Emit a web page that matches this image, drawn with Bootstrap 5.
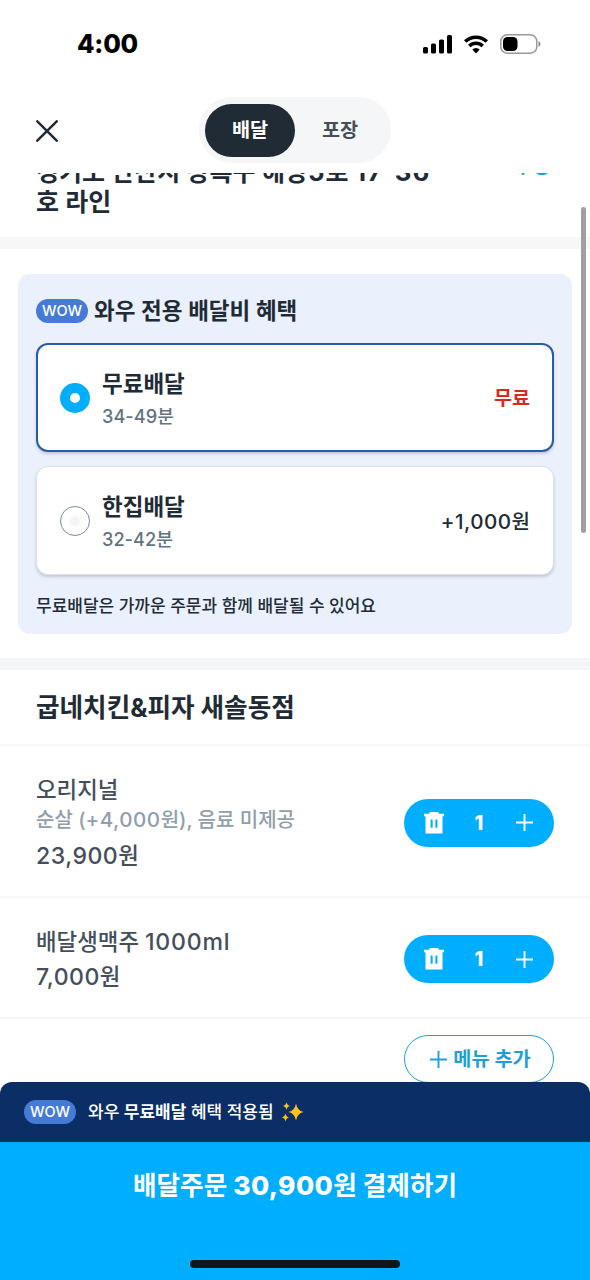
<!DOCTYPE html>
<html lang="ko">
<head>
<meta charset="utf-8">
<meta name="viewport" content="width=device-width, initial-scale=1">
<title>배달 주문</title>
<link href="https://cdn.jsdelivr.net/npm/bootstrap@5.3.0/dist/css/bootstrap.min.css" rel="stylesheet">
<style>
  body { font-family: Inter, "Noto Sans CJK KR", sans-serif; color: #212b36; background: #fff; }
  .phone { width: 590px; height: 1280px; }
  .phone > * { flex-shrink: 0; }
  .t { white-space: nowrap; line-height: 1; }
  .n { letter-spacing: .5px; font-size: 1.03em; }
  .status { height: 88px; padding: 0 49px 0 77px; }
  .clock { font-size: 25.5px; font-weight: 800; color: #000; letter-spacing: -.2px; }
  .topbar { height: 85px; padding: 10px 36px 9px 36px; }
  .switcher { width: 192px; height: 66px; padding: 7px 6px 6px; background: #f4f6f8; border-radius: 33px; margin: -1px 0 1px 141px; }
  .switcher .on, .switcher .off { width: 90px; font-size: 19.7px; padding-top: 1px; }
  .switcher .on { background: #212b36; color: #fff; border-radius: 27px; font-weight: 700; }
  .switcher .off { color: #454f5b; font-weight: 600; }
  .address { height: 64px; padding: 0 36px; }
  .address-text { font-size: 25px; line-height: 30px; font-weight: 600; margin-top: -16px; white-space: nowrap; }
  .address-text .n { font-weight: 700; letter-spacing: 1.2px; word-spacing: 4px; }
  .address-edit { font-size: 19.5px; line-height: 30px; color: #1a9fe0; margin: -22px 4px 0 0; font-weight: 600; }
  .band { height: 12px; }
  .benefit { margin: 25px 18px 24px; height: 360px; padding: 22px 18px 0; background: #eaf1fc; border-radius: 12px; }
  .wow { width: 52px; height: 24px; border-radius: 12px; background: #457bd6; color: #fff; font-size: 14.5px; font-weight: 500; }
  .benefit-title { font-size: 22.5px; font-weight: 600; margin-left: 6px; }
  .option { height: 109px; border-radius: 12px; background: #fff; padding: 1px 23px 0; border: 1px solid #dde2ea; box-shadow: 0 2px 3px rgba(50,60,80,.22); }
  .option.chosen { border: 2px solid #2a5ba8; padding: 1px 22px 0; }
  .dot { width: 30px; height: 30px; border-radius: 50%; margin: -1px 12px 0 0; }
  .dot-on { border: 10px solid #00aeff; }
  .dot-off { border: 1.5px solid #7d8b97; background: radial-gradient(circle, #f3f4f5 0 3px, #fff 7px); }
  .option-name { font-size: 22.5px; font-weight: 600; margin: 2px 0 11px; }
  .option-time { font-size: 18.2px; color: #637381; font-weight: 500; }
  .price { font-size: 20px; font-weight: 500; padding-top: 2px; }
  .red { color: #da291c; font-size: 19.5px; font-weight: 600; padding-top: 1px; }
  .note { font-size: 17px; margin-top: 23px; font-weight: 500; }
  .store { height: 74px; padding: 1px 36px 0; font-size: 25.6px; font-weight: 700; }
  .item { padding: 3px 36px 0; border-top: 2px solid #f5f6f7; color: #454f5b; font-weight: 500; }
  .item-name { font-size: 22.4px; margin-top: 2px; }
  .item-sub { font-size: 20px; color: #919eab; }
  .item-price { font-size: 22.4px; }
  .stepper { width: 150px; height: 48px; border-radius: 24px; background: #00aeff; color: #fff; padding: 0 21px 0 20px; font-size: 20px; font-weight: 800; }
  .stepper .t { margin-right: 2px; }
  .more { border-top: 2px solid #f5f6f7; padding: 16px 36px 0; height: 65px; }
  .btn-add { width: 150px; height: 48px; flex: none; border: 1.5px solid #1f9fda; border-radius: 24px; color: #1f9fda; font-size: 19.7px; font-weight: 600; gap: 6px; padding: 1px 0 0 3px; }
  .perk { height: 60px; background: #0b2e66; border-radius: 12px 12px 0 0; color: #fff; padding: 0 24px; font-size: 17px; font-weight: 500; }
  .pay { height: 138px; background: #00aeff; color: #fff; }
  .pay-label { font-size: 25.6px; font-weight: 700; padding-top: 30px; }
  .pay-label .n { font-weight: 800; letter-spacing: .4px; }
  .home { width: 210px; height: 8px; border-radius: 4px; background: #10151a; margin-bottom: 12px; }
  .scroller { top: 207px; right: 4px; width: 5px; height: 326px; border-radius: 3px; background: #a0a0a0; }
  svg { display: block; flex: none; }
</style>
</head>
<body>
<div class="phone position-relative overflow-hidden d-flex flex-column">
  <div class="status d-flex align-items-center">
    <div class="clock t me-auto">4:00</div>
    <svg width="30" height="20" viewBox="0 0 30 20"><rect x="0" y="13" width="5" height="6.500" rx="1.600"/><rect x="8" y="9.500" width="5" height="10" rx="1.600"/><rect x="16" y="5.500" width="5" height="14" rx="1.600"/><rect x="24" y="1" width="5" height="18.500" rx="1.600"/></svg>
    <svg style="margin:0 11px 0 10px" width="26" height="20" viewBox="0 0 26 20" fill="none" stroke="#000" stroke-width="3.5"><path d="M2.200 7.600a15.300 15.300 0 0 1 21.600 0M6.300 12a9.600 9.600 0 0 1 13.400 0"/><path d="M9.300 15.600a5.200 5.200 0 0 1 7.400 0L13 19.400z" fill="#000" stroke="none"/></svg>
    <svg width="41" height="20" viewBox="0 0 41 20"><rect x=".8" y=".8" width="36" height="18.400" rx="6.500" fill="none" stroke="#999" stroke-width="1.500"/><rect x="3" y="3" width="14.500" height="14" rx="4.500"/><path d="M38.500 7v6q2-1 2-3t-2-3" fill="#888"/></svg>
  </div>

  <div class="topbar d-flex align-items-center">
    <svg width="22" height="22" viewBox="0 0 22 22" fill="none" stroke="#212b36" stroke-width="2.5" stroke-linecap="round"><path d="M1.300 1.300l19.400 19.400M20.700 1.300L1.300 20.700"/></svg>
    <div class="switcher d-flex">
      <div class="on t d-flex align-items-center justify-content-center">배달</div>
      <div class="off t d-flex align-items-center justify-content-center">포장</div>
    </div>
  </div>

  <div class="address d-flex justify-content-between align-items-start overflow-hidden">
    <div class="address-text">경기도 안산시 상록구 해양<span class="n">5</span>로 <span class="n">17 36</span><br>호 라인</div>
    <div class="address-edit">수정</div>
  </div>
  <div class="band" style="background:#f7f7f8"></div>

  <section class="benefit d-flex flex-column">
    <div class="d-flex align-items-center" style="height:30px">
      <div class="wow t d-flex align-items-center justify-content-center">WOW</div>
      <div class="benefit-title t">와우 전용 배달비 혜택</div>
    </div>
    <div class="option chosen d-flex align-items-center" style="margin-top:17px">
      <div class="dot dot-on"></div>
      <div class="me-auto"><div class="option-name t">무료배달</div><div class="option-time t">34-49분</div></div>
      <div class="red t">무료</div>
    </div>
    <div class="option d-flex align-items-center" style="margin-top:14px">
      <div class="dot dot-off"></div>
      <div class="me-auto"><div class="option-name t">한집배달</div><div class="option-time t">32-42분</div></div>
      <div class="price t"><span class="n">+1,000</span>원</div>
    </div>
    <div class="note t">무료배달은 가까운 주문과 함께 배달될 수 있어요</div>
  </section>
  <div class="band" style="background:#f3f5f7"></div>

  <div class="store t d-flex align-items-center">굽네치킨&amp;피자 새솔동점</div>
  <div class="item d-flex align-items-center justify-content-between" style="height:152px">
    <div>
      <div class="item-name t">오리지널</div>
      <div class="item-sub t" style="margin:9px 0 14px">순살 (<span class="n">+4,000</span>원), 음료 미제공</div>
      <div class="item-price t"><span class="n">23,900</span>원</div>
    </div>
    <div class="stepper d-flex align-items-center justify-content-between">
      <svg width="20" height="22" viewBox="0 0 20 22" fill="#fff"><path fill-rule="evenodd" d="M5.500 0h9v1.800H20v2.400h-1.500V21.500h-17V4.200H0V1.800h5.500zM6.600 7.600v8.200h2V7.600zm4.800 0v8.200h2V7.600z"/></svg>
      <span class="t">1</span>
      <svg width="17" height="17" viewBox="0 0 17 17" stroke="#fff" stroke-width="1.9"><path d="M8.500 0v17M0 8.500h17"/></svg>
    </div>
  </div>
  <div class="item d-flex align-items-center justify-content-between" style="height:121px">
    <div>
      <div class="item-name t">배달생맥주 <span class="n" style="letter-spacing:.8px">1000ml</span></div>
      <div class="item-price t" style="margin-top:11px"><span class="n">7,000</span>원</div>
    </div>
    <div class="stepper d-flex align-items-center justify-content-between">
      <svg width="20" height="22" viewBox="0 0 20 22" fill="#fff"><path fill-rule="evenodd" d="M5.500 0h9v1.800H20v2.400h-1.500V21.500h-17V4.200H0V1.800h5.500zM6.600 7.600v8.200h2V7.600zm4.800 0v8.200h2V7.600z"/></svg>
      <span class="t">1</span>
      <svg width="17" height="17" viewBox="0 0 17 17" stroke="#fff" stroke-width="1.9"><path d="M8.500 0v17M0 8.500h17"/></svg>
    </div>
  </div>
  <div class="more d-flex justify-content-end align-items-start overflow-hidden">
    <div class="btn-add d-flex align-items-center justify-content-center t">
      <svg width="17" height="17" viewBox="0 0 17 17" stroke="#1f9fda" stroke-width="1.9"><path d="M8.500 0v17M0 8.500h17"/></svg>
      <span>메뉴 추가</span>
    </div>
  </div>

  <div class="perk d-flex align-items-center">
    <div class="wow t d-flex align-items-center justify-content-center">WOW</div>
    <div class="perk-text t" style="margin:0 8px 0 12px">와우 <span style="font-weight:600">무료배달</span> 혜택 적용됨</div>
    <svg width="22" height="20" viewBox="0 0 22 20" fill="#fdc414"><path d="M14 1.500q1.200 7 7.500 8.500q-6.300 1.500-7.500 8.500q-1.200-7-7.500-8.500q6.300-1.500 7.500-8.500zM4.500 0q.6 3.300 3.600 4q-3 .7-3.600 4q-.6-3.300-3.600-4q3-.7 3.600-4zM3.500 11.500q.6 3.300 3.500 4q-2.900.7-3.500 4q-.6-3.300-3.500-4q2.900-.7 3.500-4z"/></svg>
  </div>
  <div class="pay d-flex flex-column align-items-center justify-content-between">
    <div class="pay-label t">배달주문 <span class="n">30,900</span>원 결제하기</div>
    <div class="home"></div>
  </div>
  <div class="scroller position-absolute"></div>
</div>
<script src="https://cdn.jsdelivr.net/npm/bootstrap@5.3.0/dist/js/bootstrap.bundle.min.js"></script>
</body>
</html>
